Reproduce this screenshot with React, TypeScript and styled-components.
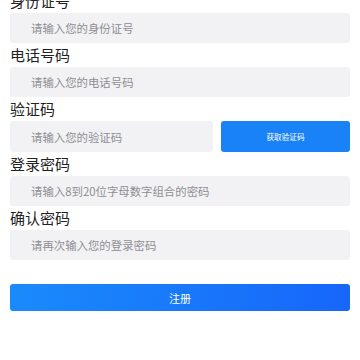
import React from 'react'
import styled, { createGlobalStyle } from 'styled-components'

const GlobalStyle = createGlobalStyle`
  html, body {
    margin: 0;
    padding: 0;
    background: #fff;
    font-family: "Noto Sans CJK SC", "Noto Sans", sans-serif;
  }
`

const Page = styled.div`
  width: 360px;
  height: 360px;
  overflow: hidden;
  background: #fff;
`

const Form = styled.form`
  display: flex;
  flex-direction: column;
  padding: 0 10px;
  margin-top: -11px;
`

const Label = styled.div`
  height: 24px;
  line-height: 24px;
  font-size: 15px;
  color: #222;
`

const Row = styled.div`
  display: flex;
  gap: 8px;
`

const Input = styled.input`
  flex: 1;
  min-width: 0;
  height: 30px;
  box-sizing: border-box;
  border: none;
  outline: none;
  border-radius: 3px;
  background: #f2f2f4;
  padding: 0 0 0 21px;
  font-family: inherit;
  font-size: 11.4px;
  color: #333;

  &::placeholder {
    color: #8e8e93;
  }
`

const CodeButton = styled.button`
  width: 129px;
  height: 31px;
  border: none;
  border-radius: 3px;
  background: #1a82f7;
  color: #fff;
  font-family: inherit;
  font-size: 7.6px;
  padding: 0;
`

const Submit = styled.button`
  margin-top: 24px;
  height: 27px;
  border: none;
  border-radius: 3px;
  background: linear-gradient(100deg, #1a8bfb, #1766f9);
  color: #fff;
  font-family: inherit;
  font-size: 11px;
  padding: 0;
`

const fields = [
  { label: '身份证号', placeholder: '请输入您的身份证号' },
  { label: '电话号码', placeholder: '请输入您的电话号码' },
]

const passwords = [
  { label: '登录密码', placeholder: '请输入8到20位字母数字组合的密码' },
  { label: '确认密码', placeholder: '请再次输入您的登录密码' },
]

export default function App(): React.ReactElement {
  return (
    <Page>
      <GlobalStyle />
      <Form onSubmit={(e) => e.preventDefault()}>
        {fields.map((f) => (
          <React.Fragment key={f.label}>
            <Label>{f.label}</Label>
            <Row>
              <Input placeholder={f.placeholder} />
            </Row>
          </React.Fragment>
        ))}
        <Label>验证码</Label>
        <Row>
          <Input placeholder="请输入您的验证码" style={{ height: 31 }} />
          <CodeButton type="button">获取验证码</CodeButton>
        </Row>
        {passwords.map((f) => (
          <React.Fragment key={f.label}>
            <Label>{f.label}</Label>
            <Row>
              <Input placeholder={f.placeholder} type="password" />
            </Row>
          </React.Fragment>
        ))}
        <Submit type="submit">注册</Submit>
      </Form>
    </Page>
  )
}
